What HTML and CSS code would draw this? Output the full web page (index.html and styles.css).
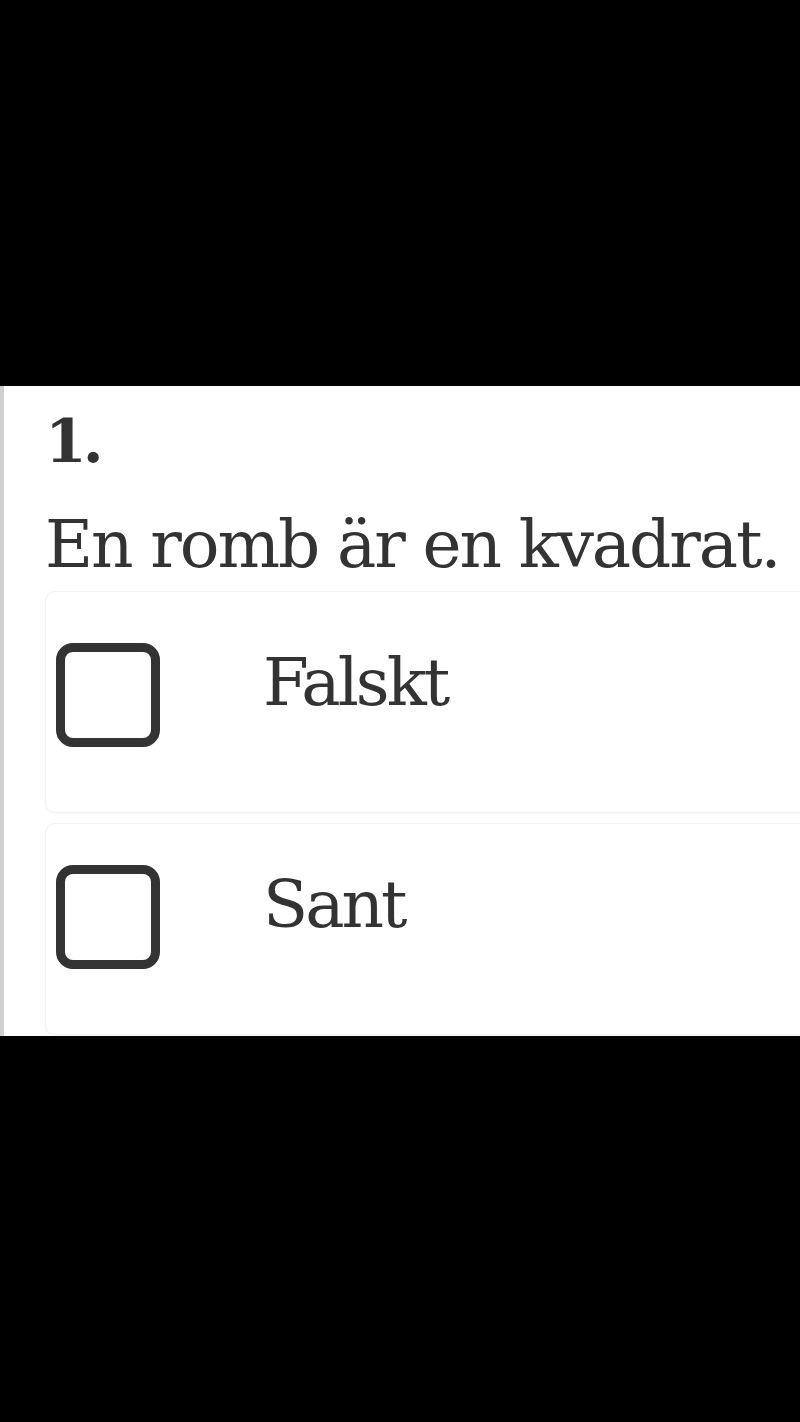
FILE: index.html
```html
<!DOCTYPE html>
<html lang="sv">
<head>
<meta charset="utf-8">
<link rel="stylesheet" href="styles.css">
</head>
<body>
<div class="screen">
  <div class="top-black"></div>
  <section class="panel">
    <div class="num">1.</div>
    <div class="question">En romb är en kvadrat.</div>
    <div class="options">
      <div class="option">
        <span class="box"></span>
        <span class="label">Falskt</span>
      </div>
      <div class="option">
        <span class="box"></span>
        <span class="label">Sant</span>
      </div>
    </div>
  </section>
  <div class="bottom-black"></div>
</div>
</body>
</html>
```
FILE: styles.css
```css
html, body {
  margin: 0;
  padding: 0;
  background: #000;
}
.screen {
  width: 800px;
  height: 1422px;
  display: flex;
  flex-direction: column;
  overflow: hidden;
}
.top-black {
  height: 386px;
  background: #000;
  flex: none;
}
.bottom-black {
  flex: 1;
  background: #000;
}
.panel {
  height: 650px;
  flex: none;
  background: #fff;
  border-left: 4px solid #cfcfcf;
  box-sizing: border-box;
  padding-left: 41px;
  overflow: hidden;
  font-family: "DejaVu Serif", "Liberation Serif", serif;
  color: #333;
}
.num {
  font-weight: bold;
  font-size: 60px;
  letter-spacing: -4px;
  line-height: 1;
  margin-top: 25px;
  height: 60px;
}
.question {
  font-size: 66px;
  letter-spacing: -2.1px;
  line-height: 1;
  margin-top: 41px;
  white-space: nowrap;
}
.options {
  margin-top: 13px;
  display: flex;
  flex-direction: column;
  gap: 10px;
}
.option {
  height: 222px;
  width: 780px;
  box-sizing: border-box;
  border-radius: 10px;
  border: 1px solid #f2f2f2;
  box-shadow: 0 1px 3px rgba(0,0,0,0.04);
  display: flex;
  align-items: center;
  padding-left: 10px;
  padding-bottom: 14px;
}
.option:last-child {
  height: 212px;
  padding-bottom: 24px;
}
.box {
  width: 104px;
  height: 104px;
  box-sizing: border-box;
  border: 9px solid #333;
  border-radius: 17px;
  flex: none;
}
.label {
  margin-left: 103px;
  font-size: 66px;
  letter-spacing: -3px;
  line-height: 1;
  margin-top: -24px;
}
```
